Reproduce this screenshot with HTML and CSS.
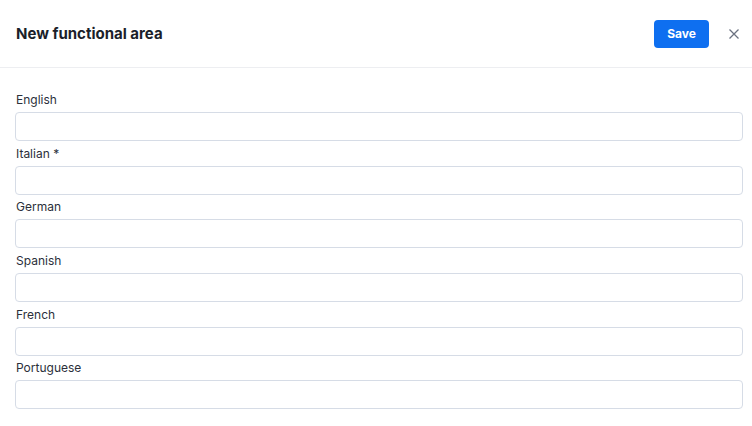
FILE: index.html
```html
<!DOCTYPE html>
<html lang="en">
<head>
  <meta charset="UTF-8">
  <meta name="viewport" content="width=device-width, initial-scale=1.0">
  <title>New functional area</title>
  <link rel="stylesheet" href="styles.css">
</head>
<body>
  <div class="header">
    <h1>New functional area</h1>
    <div class="actions">
      <button class="save">Save</button>
      <button class="close" aria-label="Close">
        <svg width="10" height="10" viewBox="0 0 10 10">
          <path d="M0.5 0.5 L9.5 9.5 M9.5 0.5 L0.5 9.5" stroke="#6b7280" stroke-width="1.3" fill="none"/>
        </svg>
      </button>
    </div>
  </div>

  <div class="form">
    <div class="field">
      <label>English</label>
      <input type="text">
    </div>
    <div class="field">
      <label>Italian *</label>
      <input type="text">
    </div>
    <div class="field">
      <label>German</label>
      <input type="text">
    </div>
    <div class="field">
      <label>Spanish</label>
      <input type="text">
    </div>
    <div class="field">
      <label>French</label>
      <input type="text">
    </div>
    <div class="field">
      <label>Portuguese</label>
      <input type="text">
    </div>
  </div>
</body>
</html>
```

FILE: styles.css
```css
body {
  margin: 0;
  font-family: Inter, "Noto Sans", sans-serif;
  background: #ffffff;
  color: #1f2433;
}
.header {
  display: flex;
  align-items: center;
  justify-content: space-between;
  height: 67px;
  padding: 0 13px 0 16px;
  border-bottom: 1px solid #edeef1;
}
h1 {
  margin: 0;
  font-size: 15px;
  font-weight: 700;
  color: #1b1f2a;
}
.actions {
  display: flex;
  align-items: center;
  gap: 20px;
}
.save {
  width: 55px;
  height: 28px;
  border: none;
  border-radius: 4px;
  background: #0e6ff0;
  color: #ffffff;
  font-family: Inter, "Noto Sans", sans-serif;
  font-size: 12px;
  font-weight: 700;
  cursor: pointer;
}
.close {
  display: flex;
  padding: 0;
  border: none;
  background: none;
  cursor: pointer;
}
.form {
  padding: 23px 9px 0 15px;
}
.field {
  display: flex;
  flex-direction: column;
  margin-bottom: 3.7px;
}
label {
  font-size: 12px;
  line-height: 18px;
  margin: 0 0 3px 1px;
  color: #2b2f3a;
}
input {
  height: 29px;
  box-sizing: border-box;
  border: 1px solid #d6dce6;
  border-radius: 4px;
  font-family: inherit;
  font-size: 12px;
  padding: 0 10px;
}
```
